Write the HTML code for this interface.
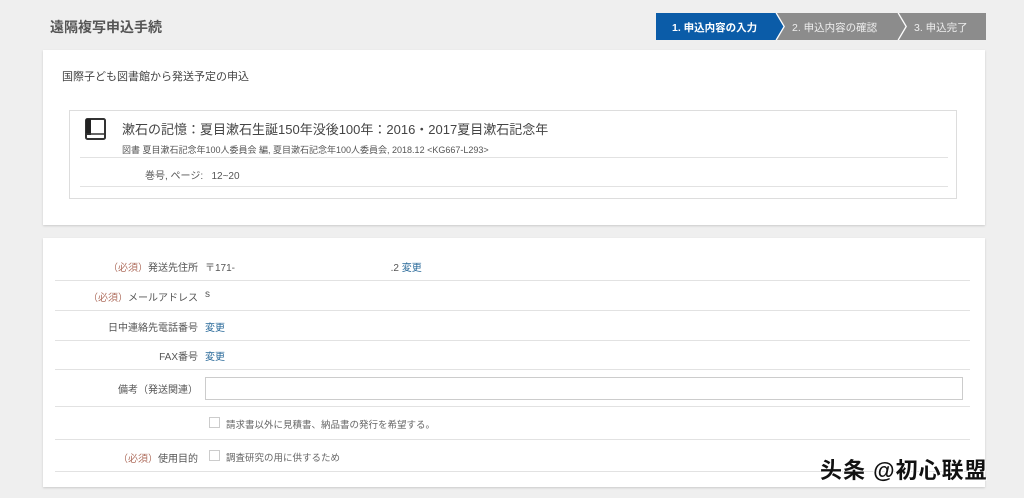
<!DOCTYPE html>
<html><head><meta charset="utf-8"><style>
*{margin:0;padding:0;box-sizing:border-box}
body{width:1024px;height:498px;background:#efefef;font-family:"Liberation Sans","Noto Sans CJK JP",sans-serif;color:#555;position:relative;overflow:hidden}
.a{position:absolute;white-space:nowrap}
.card{position:absolute;left:43px;width:942px;background:#fff;box-shadow:0 1px 2px rgba(0,0,0,.15)}
.line{position:absolute;height:1px;background:#e2e2e2}
.lab{position:absolute;right:787px;font-size:10px;color:#555;white-space:nowrap}
.req{color:#b07060}
.val{position:absolute;left:162px;font-size:10px;white-space:nowrap}
.lnk{color:#2a6a9a}
.cb{position:absolute;width:11px;height:11px;border:1px solid #ccc;background:#fff}
</style></head><body>
<div class="a" style="left:50px;top:17px;font-size:14px;font-weight:bold;color:#555">遠隔複写申込手続</div>
<svg class="a" style="left:656px;top:13px" width="330" height="27">
<polygon points="0,0 120,0 128,13.5 120,27 0,27" fill="#0b5ca8"/>
<polygon points="121,0 242,0 250,13.5 242,27 121,27 129,13.5" fill="#8c8c8c"/>
<polygon points="243,0 330,0 330,27 243,27 251,13.5" fill="#8c8c8c"/>
<polyline points="120,0 128,13.5 120,27" stroke="#fff" fill="none"/>
<polyline points="242,0 250,13.5 242,27" stroke="#fff" fill="none"/>
<text x="16" y="18" font-size="10.5" fill="#fff" font-weight="bold" font-family="Liberation Sans,Noto Sans CJK JP,sans-serif">1. 申込内容の入力</text>
<text x="136" y="18" font-size="10.5" fill="#eee" font-family="Liberation Sans,Noto Sans CJK JP,sans-serif">2. 申込内容の確認</text>
<text x="258" y="18" font-size="10.5" fill="#eee" font-family="Liberation Sans,Noto Sans CJK JP,sans-serif">3. 申込完了</text>
</svg>
<div class="card" style="top:50px;height:175px">
<div class="a" style="left:19px;top:18px;font-size:11px;color:#444">国際子ども図書館から発送予定の申込</div>
<div class="a" style="left:26px;top:60px;width:888px;height:89px;border:1px solid #ddd">
<svg class="a" style="left:15px;top:7px" width="22" height="24"><rect x="1" y="1" width="19" height="20" rx="1.5" fill="#fff" stroke="#333" stroke-width="2"/><rect x="1" y="1" width="5" height="16" fill="#222"/><line x1="1" y1="16" x2="20" y2="16" stroke="#333" stroke-width="1.5"/></svg>
<div class="a" style="left:52px;top:8px;font-size:13px;color:#444">漱石の記憶：夏目漱石生誕150年没後100年：2016・2017夏目漱石記念年</div>
<div class="a" style="left:52px;top:32px;font-size:9px;color:#555">図書 夏目漱石記念年100人委員会 編, 夏目漱石記念年100人委員会, 2018.12 &lt;KG667-L293&gt;</div>
<div class="line" style="left:10px;top:46px;width:868px"></div>
<div class="a" style="left:75px;top:56px;font-size:10px;color:#555">巻号, ページ:&nbsp;&nbsp;&nbsp;12~20</div>
<div class="line" style="left:10px;top:75px;width:868px"></div>
</div>
</div>
<div class="card" style="top:238px;height:249px">
<div class="lab" style="top:21px"><span class="req">（必須）</span>発送先住所</div>
<div class="val" style="top:21px">〒171-&nbsp;&nbsp;&nbsp;&nbsp;&nbsp;&nbsp;&nbsp;&nbsp;&nbsp;&nbsp;&nbsp;&nbsp;&nbsp;&nbsp;&nbsp;&nbsp;&nbsp;&nbsp;&nbsp;&nbsp;&nbsp;&nbsp;&nbsp;&nbsp;&nbsp;&nbsp;&nbsp;&nbsp;&nbsp;&nbsp;&nbsp;&nbsp;&nbsp;&nbsp;&nbsp;&nbsp;&nbsp;&nbsp;&nbsp;&nbsp;&nbsp;&nbsp;&nbsp;&nbsp;&nbsp;&nbsp;&nbsp;&nbsp;&nbsp;&nbsp;&nbsp;&nbsp;&nbsp;&nbsp;&nbsp;&nbsp;.2 <span class="lnk">変更</span></div>
<div class="line" style="left:12px;top:42px;width:915px"></div>
<div class="lab" style="top:51px"><span class="req">（必須）</span>メールアドレス</div>
<div class="val" style="top:51px">s</div>
<div class="line" style="left:12px;top:72px;width:915px"></div>
<div class="lab" style="top:81px">日中連絡先電話番号</div>
<div class="val lnk" style="top:81px">変更</div>
<div class="line" style="left:12px;top:102px;width:915px"></div>
<div class="lab" style="top:110px">FAX番号</div>
<div class="val lnk" style="top:110px">変更</div>
<div class="line" style="left:12px;top:131px;width:915px"></div>
<div class="lab" style="top:143px">備考（発送関連）</div>
<div class="a" style="left:162px;top:139px;width:758px;height:23px;border:1px solid #ccc"></div>
<div class="line" style="left:12px;top:168px;width:915px"></div>
<div class="cb" style="left:166px;top:179px"></div>
<div class="a" style="left:183px;top:179px;font-size:9.5px;color:#666">請求書以外に見積書、納品書の発行を希望する。</div>
<div class="line" style="left:12px;top:201px;width:915px"></div>
<div class="lab" style="top:212px"><span class="req">（必須）</span>使用目的</div>
<div class="cb" style="left:166px;top:212px"></div>
<div class="a" style="left:183px;top:212px;font-size:9.5px;color:#666">調査研究の用に供するため</div>
<div class="line" style="left:12px;top:233px;width:915px"></div>
</div>
<div class="a" style="left:820px;top:453px;font-size:22px;letter-spacing:1px;color:#111;font-weight:bold;text-shadow:1px 1px 0 #fff,-1px -1px 0 #fff">头条 @初心联盟</div>
</body></html>
